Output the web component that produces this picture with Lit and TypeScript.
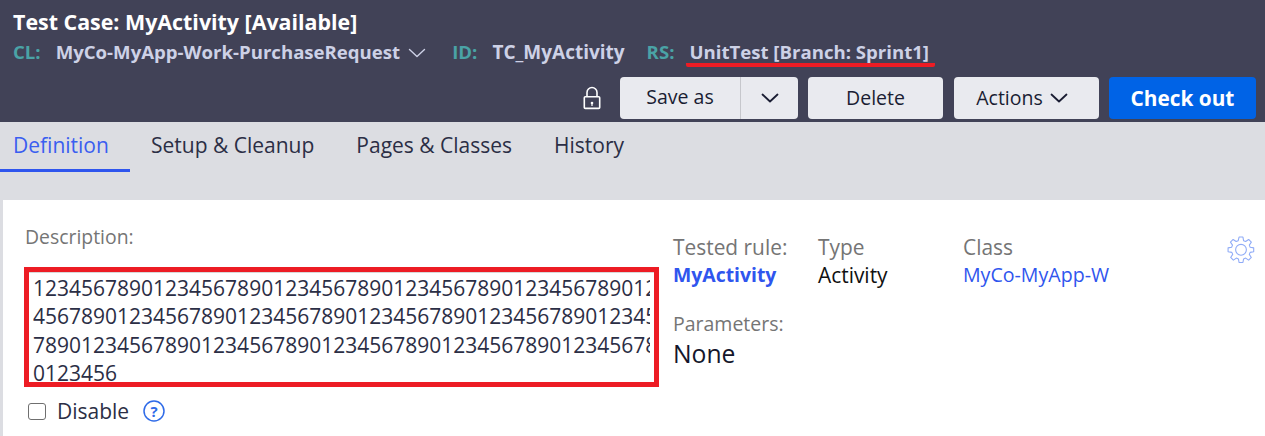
import { LitElement, html, css, svg } from "lit";
import { customElement } from "lit/decorators.js";

const chevron = (w: number, color: string, sw = 1.6) => html`<svg class="chev" width="${w}" height="${Math.round(w * 0.55)}" viewBox="0 0 18 10" fill="none" stroke="${color}" stroke-width="${sw}" stroke-linecap="round" stroke-linejoin="round"><path d="M1.5 1.5 9 8.5l7.5-7"/></svg>`;

const gearPath = svg`<path d="M11.2 1h3.6l.6 3.3 1.9.8 2.8-1.9 2.5 2.5-1.9 2.8.8 1.9 3.3.6v3.6l-3.3.6-.8 1.9 1.9 2.8-2.5 2.5-2.8-1.9-1.9.8-.6 3.3h-3.6l-.6-3.3-1.9-.8-2.8 1.9-2.5-2.5 1.9-2.8-.8-1.9L1 14.6V11l3.3-.6.8-1.9-1.9-2.8 2.5-2.5 2.8 1.9 1.9-.8z"/><circle cx="13" cy="12.8" r="5"/>`;

@customElement("app-root")
export class AppRoot extends LitElement {
  static styles = css`
    :host { display: block; width: 1265px; height: 436px; overflow: hidden; background: #dcdde2; font-family: "Open Sans", sans-serif; }
    .header { height: 122px; box-sizing: border-box; background: #414257; padding: 9px 9px 0 13px; display: flex; flex-direction: column; }
    .title { font-size: 21.4px; line-height: 26px; font-weight: 700; color: #fff; white-space: nowrap; }
    .meta { display: flex; align-items: flex-start; margin-top: 4px; height: 26px; font-size: 18.6px; line-height: 26px; font-weight: 700; white-space: nowrap; color: #cdd1e6; }
    .k { color: #4aa3a6; margin-right: 15px; margin-left: 1px; }
    .k.first { margin-left: 0; }
    .chev { display: block; flex: none; }
    .meta .chev { margin: 9px 25px 0 8px; }
    .id { margin-right: 21px; font-size: 19px; }
    .rs { margin-left: -3px; padding: 0 6px 0 3px; height: 24px; border-bottom: 4px solid #ed1c24; border-radius: 2px; }
    .actions { display: flex; justify-content: flex-end; align-items: center; gap: 10px; margin-top: 12px; height: 42px; }
    .lock { margin-right: 9px; display: block; }
    .btn { height: 42px; box-sizing: border-box; border-radius: 4px; background: #e9eaef; color: #1a1d33; font-size: 19.5px; display: flex; align-items: center; justify-content: center; white-space: nowrap; padding-bottom: 1px; }
    .split { width: 178px; padding-bottom: 0; }
    .split .main { width: 120px; text-align: center; border-right: 1px solid #c6c7cc; height: 100%; line-height: 40px; flex: none; }
    .split .drop { flex: 1; display: flex; justify-content: center; }
    .delete { width: 135px; margin-right: 1px; }
    .acts { width: 145px; gap: 7px; padding-right: 9px; }
    .checkout { width: 147px; background: #0063e6; color: #fff; font-weight: 700; font-size: 20.8px; }
    .tabs { height: 50px; display: flex; align-items: stretch; font-size: 21px; color: #2b2e45; }
    .tab { padding: 0 21px; line-height: 47px; white-space: nowrap; box-sizing: border-box; }
    .tab.first { padding: 0 21px 0 13px; width: 130px; color: #3a5ef0; border-bottom: 3px solid #2f55ee; }
    .panel { margin: 28px 0 0 3px; background: #fff; height: 236px; display: flex; }
    .left { width: 635px; margin-left: 21px; flex: none; }
    .desc-label { font-size: 19.4px; line-height: 26px; color: #757575; margin-top: 24px; padding-left: 1px; }
    .box { margin-top: 17px; box-sizing: border-box; height: 120px; border: 5px solid #ed1c24; font-size: 21px; line-height: 28.3px; color: #2b2e45; }
    .inner { border-top: 1px solid #d8d8d8; padding: 1px 4px 0; }
    .ln { overflow: hidden; white-space: nowrap; }
    .disable { display: flex; align-items: center; height: 48px; padding-left: 4px; font-size: 21px; color: #2b2e45; }
    .cb { width: 18px; height: 17px; box-sizing: border-box; border: 1.5px solid #6f6f6f; border-radius: 3px; margin-right: 11px; }
    .q { margin-left: 14px; display: block; }
    .right { flex: 1; margin-left: 14px; padding-top: 33px; display: flex; flex-direction: column; }
    .cols { display: flex; }
    .col { flex: none; }
    .c1 { width: 145px; } .c2 { width: 145px; } .c3 { width: 264px; }
    .lbl { font-size: 20.9px; line-height: 28px; color: #757575; white-space: nowrap; }
    .val { font-size: 20.9px; line-height: 28px; white-space: nowrap; color: #111; }
    .strong { font-weight: 700; color: #2f55ee; font-size: 19.4px; }
    .link { color: #2f55ee; font-size: 19.6px; }
    .params { margin-top: 21px; }
    .params .lbl { font-size: 19.5px; }
    .none { font-size: 24.7px; line-height: 32px; color: #14162b; }
    .gear { display: block; margin-top: 3px; }
  `;

  render() {
    const base = "1234567890".repeat(7);
    return html`
      <div class="header">
        <div class="title">Test Case: MyActivity [Available]</div>
        <div class="meta">
          <span class="k first">CL:</span><span>MyCo-MyApp-Work-PurchaseRequest</span>${chevron(18, "#cdd1e6", 1.4)}
          <span class="k">ID:</span><span class="id">TC_MyActivity</span>
          <span class="k">RS:</span><span class="rs">UnitTest [Branch: Sprint1]</span>
        </div>
        <div class="actions">
          <svg class="lock" width="18" height="24" viewBox="0 0 18 24" fill="none" stroke="#fff" stroke-width="1.6"><path d="M4 11V6.5a5 5 0 0 1 10 0V11"/><rect x="1.3" y="10.8" width="15.4" height="11.6" rx="1"/><circle cx="9" cy="17" r="1.3" fill="#fff" stroke="none"/><rect x="8.4" y="17" width="1.2" height="3" fill="#fff" stroke="none"/></svg>
          <div class="btn split"><span class="main">Save as</span><span class="drop">${chevron(18, "#1a1d33", 1.8)}</span></div>
          <div class="btn delete">Delete</div>
          <div class="btn acts">Actions ${chevron(18, "#1a1d33", 1.8)}</div>
          <div class="btn checkout">Check out</div>
        </div>
      </div>
      <div class="tabs">
        <div class="tab first">Definition</div>
        <div class="tab">Setup &amp; Cleanup</div>
        <div class="tab">Pages &amp; Classes</div>
        <div class="tab">History</div>
      </div>
      <div class="panel">
        <div class="left">
          <div class="desc-label">Description:</div>
          <div class="box">
            <div class="inner">
              <div class="ln">${base}</div>
              <div class="ln">${base.slice(3)}</div>
              <div class="ln">${base.slice(6)}</div>
              <div class="ln">0123456</div>
            </div>
          </div>
          <div class="disable">
            <span class="cb"></span><span>Disable</span>
            <svg class="q" width="22" height="22" viewBox="0 0 22 22" fill="none"><circle cx="11" cy="11" r="10" stroke="#2f6be8" stroke-width="1.5"/><text x="11" y="16.5" text-anchor="middle" font-family="Open Sans, sans-serif" font-size="15" font-weight="700" fill="#2f6be8">?</text></svg>
          </div>
        </div>
        <div class="right">
          <div class="cols">
            <div class="col c1"><div class="lbl">Tested rule:</div><div class="val strong">MyActivity</div></div>
            <div class="col c2"><div class="lbl">Type</div><div class="val">Activity</div></div>
            <div class="col c3"><div class="lbl">Class</div><div class="val link">MyCo-MyApp-W</div></div>
            <svg class="gear" width="28" height="28" viewBox="0 0 26 26" fill="none" stroke="#8fabf7" stroke-width="1" stroke-linejoin="round">${gearPath}</svg>
          </div>
          <div class="params">
            <div class="lbl">Parameters:</div>
            <div class="none">None</div>
          </div>
        </div>
      </div>
    `;
  }
}
